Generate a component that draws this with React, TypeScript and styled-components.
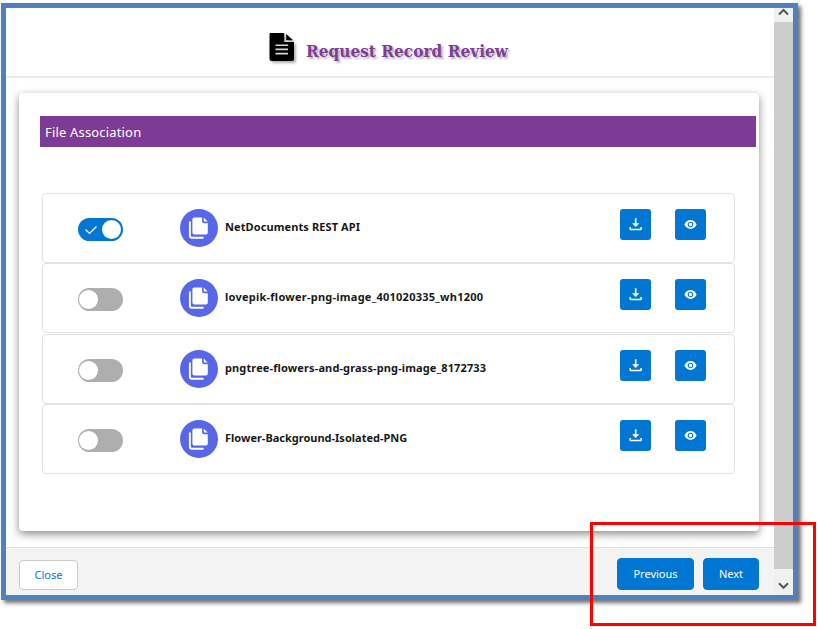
import React, { useState } from "react";
import styled, { createGlobalStyle } from "styled-components";

const GlobalStyle = createGlobalStyle`
  *, *::before, *::after { box-sizing: border-box; }
  body { margin: 0; background: #fff; overflow: hidden; font-family: "Noto Sans", "Open Sans", sans-serif; }
  button { font-family: inherit; cursor: pointer; }
`;

const Stage = styled.div`
  position: relative;
  width: 818px;
  height: 629px;
  padding: 3px 0 0 1px;
`;

const Frame = styled.div`
  display: flex;
  width: 797px;
  height: 597px;
  border: 5px solid #4f81bd;
  background: #fff;
  box-shadow: 3px 3px 4px rgba(50, 45, 45, 0.68);
`;

const Dialog = styled.div`
  display: flex;
  flex-direction: column;
  width: 768px;
`;

const Header = styled.header`
  display: flex;
  justify-content: center;
  height: 70px;
  padding: 25px 3px 0 0;
  border-bottom: 2px solid #ececec;

  svg { filter: drop-shadow(2px 2px 1px rgba(0, 0, 0, 0.3)); }
`;

const Title = styled.h1`
  margin: 6px 0 0 11px;
  color: #7f3c96;
  font: bold 17px/24px "DejaVu Serif", serif;
  font-stretch: condensed;
  letter-spacing: 0.05px;
  white-space: nowrap;
  text-shadow: 2px 2px 2px rgba(0, 0, 0, 0.3);
`;

const Content = styled.main`
  height: 469px;
  padding: 15px 15px 16px 13px;
`;

const Card = styled.section`
  height: 438px;
  padding: 23px 3px 0 21px;
  border-radius: 4px;
  background: #fff;
  box-shadow: 0 3px 9px rgba(0, 0, 0, 0.46);
`;

const Banner = styled.h2`
  height: 31px;
  margin: 0 0 46px;
  padding-left: 5px;
  background: #7e3b96;
  color: #fff;
  font-size: 13px;
  font-weight: 400;
  line-height: 32px;
  letter-spacing: 0.17px;
`;

const FileList = styled.ul`
  display: grid;
  grid-template-rows: repeat(4, 70px);
  gap: 0.25px;
  width: 693px;
  margin: 0 0 0 2px;
  padding: 0;
  list-style: none;
`;

const FileRow = styled.li`
  display: grid;
  grid-template-columns: 102px 45px 395px 55px 31px;
  align-items: start;
  height: 70px;
  padding: 15px 0 0 35px;
  border: 1px solid #e2e2e2;
  border-radius: 4px;
`;

const Toggle = styled.button<{ $on: boolean }>`
  display: flex;
  align-items: center;
  justify-content: ${(p) => (p.$on ? "space-between" : "flex-start")};
  width: 45px;
  height: 23px;
  margin-top: 9px;
  padding: ${(p) => (p.$on ? "0 2px 0 6px" : "0 1px")};
  border: 0;
  border-radius: 12px;
  background: ${(p) => (p.$on ? "#0176d3" : "#aeaeae")};
`;

const Knob = styled.span`
  width: 19px;
  height: 19px;
  border-radius: 50%;
  background: #fff;
`;

const FileBadge = styled.span`
  display: flex;
  width: 38px;
  height: 38px;
  border-radius: 50%;
  background: #5867e8;
`;

const FileName = styled.span<{ $spacing: number }>`
  padding-top: 9px;
  color: #181818;
  font-size: 11px;
  font-weight: 700;
  line-height: 18px;
  letter-spacing: ${(p) => p.$spacing}px;
  white-space: nowrap;
`;

const IconButton = styled.button`
  display: grid;
  place-items: center;
  width: 31px;
  height: 31px;
  padding: 0;
  border: 0;
  border-radius: 3px;
  background: #0176d3;
`;

const Footer = styled.footer`
  display: flex;
  gap: 9px;
  height: 48px;
  padding: 12px 15px 0 13px;
  border-top: 1px solid #dfdfdf;
  background: #f3f3f3;
`;

const Button = styled.button<{ $width: number; $primary?: boolean }>`
  width: ${(p) => p.$width}px;
  height: ${(p) => (p.$primary ? 32 : 30)}px;
  margin-top: ${(p) => (p.$primary ? -2 : 0)}px;
  padding: 0 0 ${(p) => (p.$primary ? 1 : 2)}px;
  border: 1px solid ${(p) => (p.$primary ? "#0176d3" : "#c9c9c9")};
  border-radius: 4px;
  background: ${(p) => (p.$primary ? "#0176d3" : "#fff")};
  color: ${(p) => (p.$primary ? "#fff" : "#0176d3")};
  font-size: 11px;
`;

const Spacer = styled.div`
  flex: 1;
`;

const Scrollbar = styled.div`
  display: flex;
  flex-direction: column;
  width: 19px;
  background: #f0f0f0;
`;

const ScrollEnd = styled.div<{ $height: number; $top: number }>`
  display: flex;
  justify-content: center;
  height: ${(p) => p.$height}px;
  padding-top: ${(p) => p.$top}px;
`;

const Thumb = styled.div`
  flex: 1;
  background: #cdcdcd;
`;

const Highlight = styled.div`
  position: absolute;
  left: 590px;
  top: 522px;
  width: 226px;
  height: 104px;
  border: 3px solid #fe0000;
`;

const DocumentIcon = () => (
  <svg width="26" height="28" viewBox="0 0 26 28">
    <path d="M1.5 0H15.2V9H25V26Q25 28 23 28H2.5Q.5 28 .5 26V1Q.5 0 1.5 0Z" fill="#000" />
    <path d="M17.2 1V7.3H24Z" fill="#000" />
    <path d="M6.5 12.2H19M6.5 16.4H19M6.5 20.6H19" stroke="#d5d5d5" strokeWidth="1.6" />
  </svg>
);

const CopyIcon = () => (
  <svg width="38" height="38" viewBox="0 0 38 38">
    <path d="M14.3 8.4H22V12.2Q22 14.3 24.1 14.3H27.8V23.5Q27.8 25.4 25.9 25.4H14.3Q12.4 25.4 12.4 23.5V10.3Q12.4 8.4 14.3 8.4Z" fill="#fff" />
    <path d="M23.7 8.6L27.6 12.5H24.4Q23.7 12.5 23.7 11.8Z" fill="#fff" />
    <path d="M9.9 13.2V26.8Q9.9 28.8 11.9 28.8H22.8" fill="none" stroke="#fff" strokeWidth="1.9" strokeLinecap="round" />
  </svg>
);

const DownloadIcon = () => (
  <svg width="13" height="13" viewBox="0 0 13 13" fill="none" stroke="#fff">
    <path d="M1.2 9V10.8Q1.2 11.6 2 11.6H11.4Q12.2 11.6 12.2 10.8V9" strokeWidth="1.5" />
    <path d="M6.7 .3V6" strokeWidth="1.6" />
    <path d="M3.1 5.3H10.3L6.7 9Z" fill="#fff" stroke="none" />
  </svg>
);

const EyeIcon = () => (
  <svg width="13" height="9" viewBox="0 0 14 10">
    <path d="M.2 5C3.3-1.5 10.7-1.5 13.8 5C10.7 11.5 3.3 11.5 .2 5Z" fill="#fff" />
    <circle cx="7" cy="5" r="2.5" fill="#fff" stroke="#0176d3" strokeWidth="1.2" />
  </svg>
);

const CheckIcon = () => (
  <svg width="14" height="12" viewBox="0 0 14 12">
    <path d="M1.5 5.5L5.5 9.5L12.5 2.5" fill="none" stroke="#fff" strokeWidth="1.2" />
  </svg>
);

const Chevron = ({ down = false }: { down?: boolean }) => (
  <svg width="11" height="8" viewBox="0 0 11 8">
    <path d={down ? "M1 1.3L5.5 5.8L10 1.3" : "M1 6.5L5.5 2L10 6.5"} fill="none" stroke="#555" strokeWidth="2" />
  </svg>
);

const files = [
  { name: "NetDocuments REST API", spacing: 0.1, on: true },
  { name: "lovepik-flower-png-image_401020335_wh1200", spacing: 0.25, on: false },
  { name: "pngtree-flowers-and-grass-png-image_8172733", spacing: 0.13, on: false },
  { name: "Flower-Background-Isolated-PNG", spacing: 0, on: false },
];

export default function App() {
  const [selected, setSelected] = useState(files.map((f) => f.on));
  const toggle = (index: number) => setSelected(selected.map((v, i) => (i === index ? !v : v)));

  return (
    <Stage>
      <GlobalStyle />
      <Frame>
        <Dialog>
          <Header>
            <DocumentIcon />
            <Title>Request Record Review</Title>
          </Header>
          <Content>
            <Card>
              <Banner>File Association</Banner>
              <FileList>
                {files.map((file, i) => (
                  <FileRow key={file.name}>
                    <Toggle $on={selected[i]} role="switch" aria-checked={selected[i]} aria-label={file.name} onClick={() => toggle(i)}>
                      {selected[i] && <CheckIcon />}
                      <Knob />
                    </Toggle>
                    <FileBadge><CopyIcon /></FileBadge>
                    <FileName $spacing={file.spacing}>{file.name}</FileName>
                    <IconButton aria-label="Download"><DownloadIcon /></IconButton>
                    <IconButton aria-label="Preview"><EyeIcon /></IconButton>
                  </FileRow>
                ))}
              </FileList>
            </Card>
          </Content>
          <Footer>
            <Button $width={59}>Close</Button>
            <Spacer />
            <Button $width={77} $primary>Previous</Button>
            <Button $width={56} $primary>Next</Button>
          </Footer>
        </Dialog>
        <Scrollbar>
          <ScrollEnd $height={14} $top={0}><Chevron /></ScrollEnd>
          <Thumb />
          <ScrollEnd $height={26} $top={13}><Chevron down /></ScrollEnd>
        </Scrollbar>
      </Frame>
      <Highlight />
    </Stage>
  );
}
